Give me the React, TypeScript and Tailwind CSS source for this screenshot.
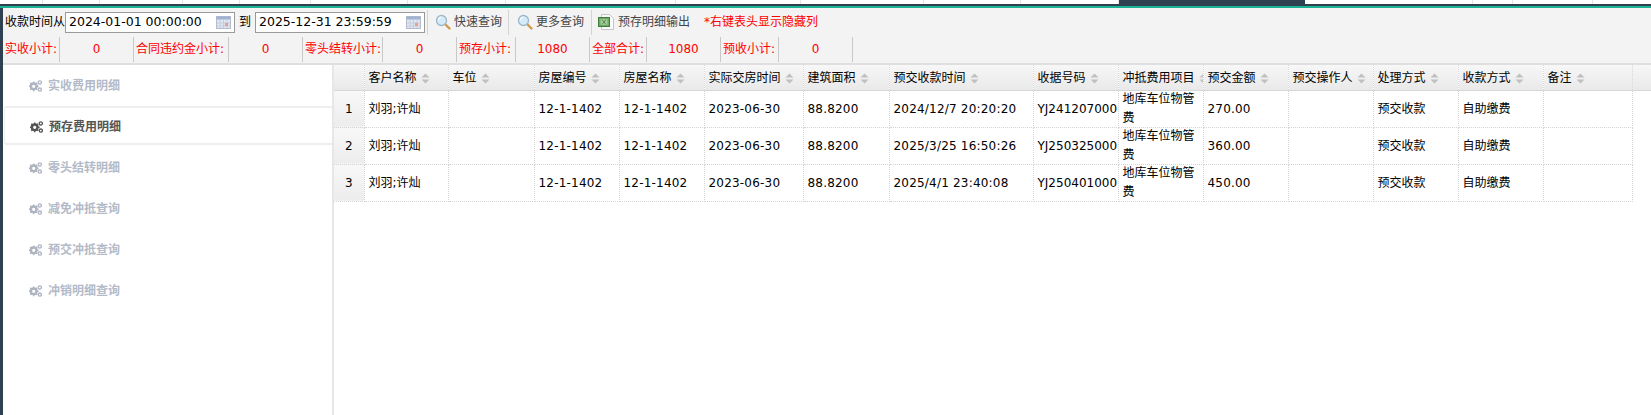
const latin = "font-['DejaVu_Sans','Noto_Sans_CJK_SC',sans-serif]";

function Sort() {
  return (
    <svg width="9" height="11" viewBox="0 0 9 11" className="ml-[4px] inline-block shrink-0">
      <path d="M4.5 0.5 L8.5 4.5 H0.5 Z M0.5 6.5 H8.5 L4.5 10.5 Z" fill="#c0c0c0" />
    </svg>
  );
}

function Calendar() {
  return (
    <svg width="15" height="13" viewBox="0 0 15 13" className="shrink-0">
      <rect x="0.5" y="0.5" width="14" height="12" fill="#dfe6f2" stroke="#b4bccb" />
      <rect x="0.5" y="0.5" width="14" height="3" fill="#9fb2d2" />
      <path d="M4 4v8M7.5 4v8M11 4v8M1 7h13M1 10h13" stroke="#c5cede" />
      <rect x="9" y="7" width="3" height="3" fill="#e8a08c" />
    </svg>
  );
}

function Magnifier() {
  return (
    <svg width="16" height="16" viewBox="0 0 16 16" className="shrink-0">
      <path d="M9.5 9.5 L14.5 14.5" stroke="#d09a4a" strokeWidth="2.4" strokeLinecap="round" />
      <circle cx="6.5" cy="6.5" r="5" fill="#d4ecf8" stroke="#9db7c8" strokeWidth="1.3" />
      <path d="M3.5 6 a3 3 0 0 1 3-3" stroke="#ffffff" strokeWidth="1.2" fill="none" />
    </svg>
  );
}

function Excel() {
  return (
    <svg width="17" height="16" viewBox="0 0 17 16" className="shrink-0">
      <path d="M3.5 0.5 H11.5 L15.5 4.5 V15.5 H3.5 Z" fill="#fafafa" stroke="#c6c6c6" />
      <rect x="0.5" y="3.5" width="11" height="9" fill="#6fa866" stroke="#3f7d3a" />
      <path d="M2.5 6h7M2.5 8h7M2.5 10h7" stroke="#dcebd6" />
      <path d="M4 5.5l4 5M8 5.5l-4 5" stroke="#3f7d3a" strokeWidth="0.8" />
    </svg>
  );
}

function Gears({ dark }: { dark?: boolean }) {
  const c = dark ? "#555555" : "#aeb5c1";
  return (
    <svg width="13" height="12" viewBox="0 0 13 12" className="shrink-0">
      <circle cx="4.7" cy="6.3" r="2.8" fill="none" stroke={c} strokeWidth="2.4" />
      <path d="M4.7 1.4v1.6M4.7 9.6v1.6M-0.2 6.3h1.6M8 6.3h1.6M1.3 2.9l1.1 1.1M7 8.6l1.1 1.1M1.3 9.7l1.1-1.1M7 4l1.1-1.1" stroke={c} strokeWidth="1.5" />
      <circle cx="10.8" cy="2.4" r="1.6" fill="none" stroke={c} strokeWidth="1.3" />
      <circle cx="10.8" cy="9.6" r="1.6" fill="none" stroke={c} strokeWidth="1.3" />
    </svg>
  );
}

function DateBox({ value }: { value: string }) {
  return (
    <div className="flex h-[21px] w-[170px] items-center justify-between border border-[#9a9a9a] bg-white pl-[3px] pr-[3px]">
      <span className="text-[12.5px] leading-none text-black">{value}</span>
      <Calendar />
    </div>
  );
}

function ToolBtn({ icon, label, w }: { icon: React.ReactNode; label: string; w: string }) {
  return (
    <div className={`flex h-[25px] items-center gap-[3px] border-l border-[#d4d4d4] ${w}`}>
      {icon}
      <span className="text-xs text-[#444]">{label}</span>
    </div>
  );
}

const stats: [string, string, string][] = [
  ["实收小计:", "0", "w-[57px]"],
  ["合同违约金小计:", "0", "w-[95px]"],
  ["零头结转小计:", "0", "w-[80px]"],
  ["预存小计:", "1080", "w-[59px]"],
  ["全部合计:", "1080", "w-[57px]"],
  ["预收小计:", "0", "w-[58px]"],
];

const menu = ["实收费用明细", "预存费用明细", "零头结转明细", "减免冲抵查询", "预交冲抵查询", "冲销明细查询"];

const cols: [string, string][] = [
  ["客户名称", "w-[84px]"],
  ["车位", "w-[86px]"],
  ["房屋编号", "w-[85px]"],
  ["房屋名称", "w-[85px]"],
  ["实际交房时间", "w-[99px]"],
  ["建筑面积", "w-[86px]"],
  ["预交收款时间", "w-[144px]"],
  ["收据号码", "w-[85px]"],
  ["冲抵费用项目", "w-[85px]"],
  ["预交金额", "w-[85px]"],
  ["预交操作人", "w-[85px]"],
  ["处理方式", "w-[85px]"],
  ["收款方式", "w-[85px]"],
  ["备注", "w-[89px]"],
];

const rows = [
  ["2024/12/7 20:20:20", "YJ241207000", "270.00"],
  ["2025/3/25 16:50:26", "YJ250325000", "360.00"],
  ["2025/4/1 23:40:08", "YJ250401000", "450.00"],
];

const cell = "border-r border-b border-dotted border-[#d4d4d4] p-0 pl-[4px]";
const num = "tracking-[0.2px]";
const head = "border-r border-b border-dotted border-r-[#d8d8d8] border-b-[#d8d8d8] [border-bottom-style:solid] p-0";

export default function App() {
  const tabLines = ["w-[43px]", "w-[57px]", "w-[83px]", "w-[57px]", "w-[71px]", "w-[97px]", "w-[98px]", "w-[170px]", "w-[125px]", "w-[123px]", "w-[97px]", "w-[98px]"];
  return (
    <div className={`flex h-[415px] w-[1651px] flex-col overflow-hidden bg-white ${latin}`}>
      <div className="flex h-[4px] shrink-0">
        {tabLines.map((w, i) => (
          <div key={i} className={`${w} border-r border-[#e4e4e4]`} />
        ))}
        <div className="w-[186px] bg-[#2f4050]" />
        <div className="w-[168px] border-r border-[#e4e4e4]" />
        <div className="w-[40px] border-r border-[#e4e4e4]" />
        <div className="w-[80px] border-r border-[#e4e4e4]" />
      </div>
      <div className="h-[2px] shrink-0 bg-[#2f4050]" />
      <div className="h-[2px] shrink-0 bg-[#1ab394]" />
      <div className="flex min-h-0 flex-1">
        <div className="w-[3px] shrink-0 bg-[#2f4050]" />
        <div className="flex min-w-0 flex-1 flex-col">
          <div className="flex h-[28px] shrink-0 items-center bg-[#f3f3f3] pl-[2px]">
            <span className="w-[60px] whitespace-nowrap text-xs text-black">收款时间从</span>
            <DateBox value="2024-01-01 00:00:00" />
            <span className="w-[20px] text-center text-xs text-black">到</span>
            <DateBox value="2025-12-31 23:59:59" />
            <div className="w-[2px]" />
            <ToolBtn icon={<Magnifier />} label="快速查询" w="w-[81px] pl-[7px]" />
            <ToolBtn icon={<Magnifier />} label="更多查询" w="w-[83px] pl-[8px]" />
            <ToolBtn icon={<Excel />} label="预存明细输出" w="w-[113px] pl-[6px]" />
            <span className="text-xs text-[#ff0000]">*右键表头显示隐藏列</span>
          </div>
          <div className="flex h-[29px] shrink-0 items-start border-b-2 border-[#dfdfdf] bg-[#f3f3f3] pt-[1px]">
            {stats.map(([label, value, lw]) => (
              <div key={label} className="flex h-[25px] items-center">
                <span className={`${lw} whitespace-nowrap border-r border-[#c8c8c8] pl-[2px] text-xs leading-[25px] text-[#ff0000]`}>{label}</span>
                <span className="w-[74px] border-r border-[#c8c8c8] text-center text-xs leading-[25px] text-[#ff0000]">{value}</span>
              </div>
            ))}
          </div>
          <div className="flex min-h-0 flex-1">
            <div className="w-[331px] shrink-0 border-r-2 border-[#e7e7e7]">
              {menu.map((m, i) => (
                <div
                  key={m}
                  className={
                    i === 1
                      ? "mb-[2px] ml-[1px] flex h-[39px] items-center rounded-l-[3px] border border-y-2 border-r-0 border-[#eeeeee] pl-[25px] pt-[2px]"
                      : "flex h-[41px] items-center pl-[26px]"
                  }
                >
                  <Gears dark={i === 1} />
                  <span className={`ml-[6px] text-xs font-bold ${i === 1 ? "text-[#555]" : "text-[#b3bac8]"}`}>{m}</span>
                </div>
              ))}
            </div>
            <div className="min-w-0 flex-1">
              <table className="w-full table-fixed border-collapse text-xs text-black">
                <thead>
                  <tr className="h-[25px] bg-gradient-to-b from-[#f7f7f7] to-[#e9e9e9]">
                    <th className={`w-[30px] ${head}`} />
                    {cols.map(([name, w]) => (
                      <th key={name} className={`${w} overflow-hidden ${head} pl-[4px] text-left font-normal`}>
                        <div className="flex items-center whitespace-nowrap pt-[2px]">
                          {name}
                          <Sort />
                        </div>
                      </th>
                    ))}
                    <th className="border-b border-[#d8d8d8] p-0" />
                  </tr>
                </thead>
                <tbody>
                  {rows.map(([time, no, amt], i) => (
                    <tr key={no} className="h-[37px]">
                      <td className="border-r border-b border-dotted border-[#d4d4d4] bg-gradient-to-b from-[#f8f8f8] to-[#ececec] p-0 text-center">{i + 1}</td>
                      <td className={cell}>刘羽;许灿</td>
                      <td className={cell} />
                      <td className={`${cell} ${num}`}>12-1-1402</td>
                      <td className={`${cell} ${num}`}>12-1-1402</td>
                      <td className={`${cell} ${num}`}>2023-06-30</td>
                      <td className={`${cell} ${num}`}>88.8200</td>
                      <td className={`${cell} ${num}`}>{time}</td>
                      <td className={`${cell} whitespace-nowrap`}>{no}</td>
                      <td className={cell}>
                        <div className="-my-[1px] leading-[19px]">地库车位物管费</div>
                      </td>
                      <td className={`${cell} ${num}`}>{amt}</td>
                      <td className={cell} />
                      <td className={cell}>预交收款</td>
                      <td className={cell}>自助缴费</td>
                      <td className={cell} />
                      <td className="p-0" />
                    </tr>
                  ))}
                </tbody>
              </table>
            </div>
          </div>
        </div>
      </div>
    </div>
  );
}
